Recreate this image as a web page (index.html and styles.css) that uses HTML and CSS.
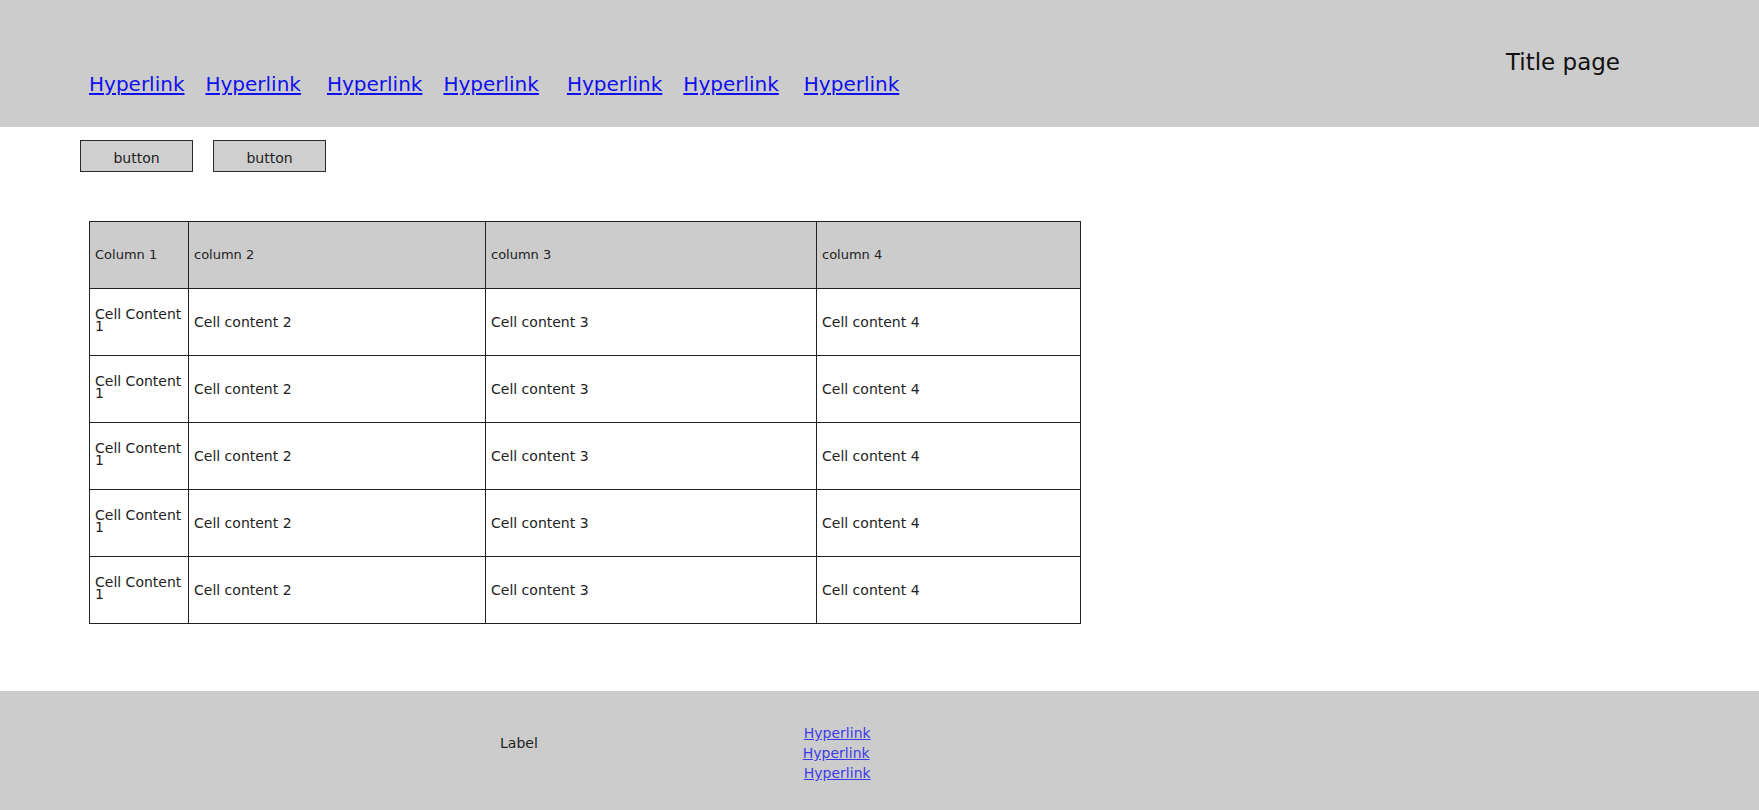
FILE: index.html
```html
<!DOCTYPE html>
<html lang="en">
<head>
<meta charset="utf-8">
<title>Title page</title>
<link rel="stylesheet" href="styles.css">
</head>
<body>
<header class="top">
  <nav class="nav">
    <a href="#" class="nav-link l1">Hyperlink</a>
    <a href="#" class="nav-link l2">Hyperlink</a>
    <a href="#" class="nav-link l3">Hyperlink</a>
    <a href="#" class="nav-link l4">Hyperlink</a>
    <a href="#" class="nav-link l5">Hyperlink</a>
    <a href="#" class="nav-link l6">Hyperlink</a>
    <a href="#" class="nav-link l7">Hyperlink</a>
  </nav>
  <div class="title">Title page</div>
</header>
<main class="main">
  <div class="actions">
    <button class="btn">button</button>
    <button class="btn">button</button>
  </div>
  <table class="grid">
    <colgroup>
      <col class="c1"><col class="c2"><col class="c3"><col class="c4">
    </colgroup>
    <thead>
      <tr><th>Column 1</th><th>column 2</th><th>column 3</th><th>column 4</th></tr>
    </thead>
    <tbody>
      <tr><td class="first">Cell Content 1</td><td>Cell content 2</td><td>Cell content 3</td><td>Cell content 4</td></tr>
      <tr><td class="first">Cell Content 1</td><td>Cell content 2</td><td>Cell content 3</td><td>Cell content 4</td></tr>
      <tr><td class="first">Cell Content 1</td><td>Cell content 2</td><td>Cell content 3</td><td>Cell content 4</td></tr>
      <tr><td class="first">Cell Content 1</td><td>Cell content 2</td><td>Cell content 3</td><td>Cell content 4</td></tr>
      <tr><td class="first">Cell Content 1</td><td>Cell content 2</td><td>Cell content 3</td><td>Cell content 4</td></tr>
    </tbody>
  </table>
</main>
<footer class="foot">
  <div class="label">Label</div>
  <div class="foot-links">
    <a href="#" class="foot-link">Hyperlink</a>
    <a href="#" class="foot-link shift">Hyperlink</a>
    <a href="#" class="foot-link">Hyperlink</a>
  </div>
</footer>
</body>
</html>
```

FILE: styles.css
```css
* { box-sizing: border-box; }
html, body {
  margin: 0;
  padding: 0;
}
body {
  font-family: "DejaVu Sans", "Liberation Sans", sans-serif;
  color: #222;
  background: #fff;
  width: 1759px;
  height: 810px;
  overflow: hidden;
}

/* header */
.top {
  height: 127px;
  background: #cccccc;
  display: flex;
  justify-content: space-between;
  align-items: flex-start;
}
.nav {
  display: flex;
  margin-top: 72px;
  padding-left: 89px;
}
.nav-link {
  font-size: 20px;
  line-height: 24px;
  color: #1010f0;
  text-decoration: underline;
  text-decoration-thickness: 1.5px;
  text-underline-offset: 2px;
}
.l2 { margin-left: 21px; }
.l3 { margin-left: 26px; }
.l4 { margin-left: 21px; }
.l5 { margin-left: 28px; }
.l6 { margin-left: 21px; }
.l7 { margin-left: 25px; }
.title {
  margin-top: 48px;
  margin-right: 139px;
  font-size: 23px;
  line-height: 28px;
  color: #111;
}

/* buttons */
.actions {
  display: flex;
  gap: 20px;
  padding: 13px 0 0 80px;
}
.btn {
  width: 113px;
  height: 32px;
  background: #cfcfcf;
  border: 1.5px solid #2a2a2a;
  border-radius: 0;
  font-family: inherit;
  font-size: 14px;
  color: #222;
  padding: 3px 0 0;
}

/* table */
.grid {
  margin: 49px 0 0 89px;
  border-collapse: collapse;
  table-layout: fixed;
  width: 991px;
  border: 1.5px solid #222;
}
.c1 { width: 99px; }
.c2 { width: 297px; }
.c3 { width: 331px; }
.c4 { width: 264px; }
.grid th,
.grid td {
  border: 1.5px solid #222;
  height: 67px;
  padding: 0 4px 0 5px;
  text-align: left;
  vertical-align: middle;
  font-weight: normal;
  color: #222;
}
.grid th {
  background: #cccccc;
  font-size: 13px;
  padding-bottom: 2px;
}
.grid td {
  font-size: 14px;
}
.grid td.first {
  line-height: 12px;
  padding-bottom: 4px;
}

/* footer */
.foot {
  margin-top: 67px;
  height: 119px;
  background: #cccccc;
  display: flex;
  align-items: flex-start;
}
.label {
  margin: 43px 0 0 500px;
  font-size: 14px;
  line-height: 18px;
  color: #222;
}
.foot-links {
  margin: 32px 0 0 266px;
  display: flex;
  flex-direction: column;
}
.foot-link {
  font-size: 14px;
  line-height: 20px;
  color: #3c3ce6;
}
.foot-link.shift {
  margin-left: -1px;
}
```
